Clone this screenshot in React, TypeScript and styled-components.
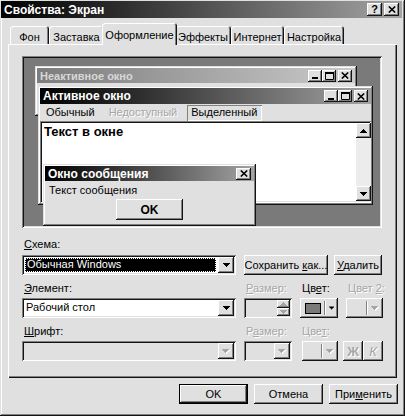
import React from "react";
import styled, { createGlobalStyle, css } from "styled-components";

const FACE = "#e0e0e0";
const LIGHT = "#ffffff";
const SHADOW = "#808080";
const DARK = "#141414";
const DISABLED = "#a6a6a6";

const GlobalStyle = createGlobalStyle`
  html, body { margin: 0; padding: 0; background: ${FACE}; }
  * { box-sizing: border-box; }
`;

const raisedBevel = css`
  box-shadow: inset -1px -1px ${DARK}, inset 1px 1px ${LIGHT}, inset -2px -2px ${SHADOW}, inset 2px 2px ${FACE};
`;
const windowBevel = css`
  box-shadow: inset -1px -1px ${DARK}, inset 1px 1px ${FACE}, inset -2px -2px ${SHADOW}, inset 2px 2px ${LIGHT};
`;
const sunkenBevel = css`
  box-shadow: inset 1px 1px ${SHADOW}, inset -1px -1px ${LIGHT}, inset 2px 2px ${DARK}, inset -2px -2px ${FACE};
`;
const disabledText = css`
  color: ${DISABLED};
  text-shadow: 1px 1px ${LIGHT};
`;

const Dialog = styled.div`
  width: 405px;
  height: 416px;
  padding: 1px 3px 3px 1px;
  background: ${FACE};
  ${windowBevel};
  display: flex;
  flex-direction: column;
  font-family: "Liberation Sans", Arial, sans-serif;
  font-size: 11px;
  color: #000;
`;

const Caption = styled.div<{ $variant: "active" | "inactive"; $height: number; $size: number }>`
  flex: none;
  height: ${(p) => p.$height}px;
  display: flex;
  align-items: center;
  justify-content: space-between;
  padding: 0 3px 0 3px;
  font-weight: bold;
  font-size: ${(p) => p.$size}px;
  white-space: nowrap;
  color: ${(p) => (p.$variant === "active" ? "#fff" : "#d8d8d8")};
  background: ${(p) =>
    p.$variant === "active"
      ? "linear-gradient(90deg, #000 0%, #202020 22%, #a4a4a4 100%)"
      : "linear-gradient(90deg, #7c7c7c 0%, #cacaca 100%)"};
`;

const CaptionButtons = styled.div<{ $gap: number }>`
  display: flex;
  gap: ${(p) => p.$gap}px;
`;

const CaptionButton = styled.div<{ $w: number; $h: number }>`
  width: ${(p) => p.$w}px;
  height: ${(p) => p.$h}px;
  background: ${FACE};
  ${raisedBevel};
  display: flex;
  align-items: center;
  justify-content: center;
  color: #000;
  font-size: 11px;
  font-weight: bold;
  line-height: 1;
`;

const Body = styled.div`
  flex: 1;
  display: flex;
  flex-direction: column;
  padding: 5px 5px 0 7px;
`;

const TabStrip = styled.div`
  display: flex;
  align-items: flex-end;
  height: 21px;
  padding-left: 2px;
  position: relative;
  z-index: 1;
`;

const Tab = styled.div<{ $width: number; $active?: boolean }>`
  width: ${(p) => p.$width}px;
  height: ${(p) => (p.$active ? 22 : 18)}px;
  margin: ${(p) => (p.$active ? "0 -2px -1px" : "0")};
  padding-top: ${(p) => (p.$active ? 6 : 5)}px;
  text-align: center;
  line-height: 13px;
  white-space: nowrap;
  background: ${FACE};
  border-radius: 3px 3px 0 0;
  box-shadow: inset 1px 1px ${LIGHT}, inset -1px 0 ${DARK}, inset -2px 0 ${SHADOW};
  position: relative;
  z-index: ${(p) => (p.$active ? 2 : 1)};
`;

const Panel = styled.div`
  height: 334px;
  flex: none;
  padding: 12px 14px 0;
  box-shadow: inset 1px 1px ${LIGHT}, inset -1px -1px ${DARK}, inset -2px -2px ${SHADOW};
  display: flex;
  flex-direction: column;
`;

/* preview desktop with overlapping sample windows */
const Desktop = styled.div`
  position: relative;
  flex: none;
  width: 360px;
  height: 172px;
  background: #7a7a7a;
  ${sunkenBevel};
  overflow: hidden;
`;

const SampleWindow = styled.div<{ $x: number; $y: number; $w: number; $h: number }>`
  position: absolute;
  left: ${(p) => p.$x}px;
  top: ${(p) => p.$y}px;
  width: ${(p) => p.$w}px;
  height: ${(p) => p.$h}px;
  padding: 2px;
  background: ${FACE};
  ${windowBevel};
  display: flex;
  flex-direction: column;
`;

const MenuBar = styled.div`
  height: 17px;
  display: flex;
  align-items: center;
  padding-left: 2px;
`;

const MenuItem = styled.div<{ $state?: "disabled" | "selected" }>`
  height: 16px;
  line-height: 15px;
  padding: 0 5px 0 4px;
  margin-right: 5px;
  ${(p) => p.$state === "disabled" && disabledText};
  ${(p) =>
    p.$state === "selected" &&
    css`
      box-shadow: inset 1px 1px ${SHADOW}, inset -1px -1px ${LIGHT};
    `};
`;

const TextArea = styled.div`
  flex: 1;
  display: flex;
  background: #fff;
  padding: 2px 0 2px 2px;
  ${sunkenBevel};
`;

const TextContent = styled.div`
  flex: 1;
  padding: 1px 2px;
  font-size: 13px;
  font-weight: bold;
  line-height: 15px;
`;

const ScrollBar = styled.div`
  width: 15px;
  display: flex;
  flex-direction: column;
  justify-content: space-between;
  background: #ececec;
`;

const ScrollButton = styled.div`
  width: 15px;
  height: 15px;
  background: ${FACE};
  ${raisedBevel};
  display: flex;
  align-items: center;
  justify-content: center;
`;

const MessageBody = styled.div`
  flex: 1;
  display: flex;
  flex-direction: column;
  padding: 3px 2px 0;
`;

const MessageText = styled.div`
  line-height: 13px;
  height: 14px;
  padding-left: 2px;
`;

const PushButton = styled.div<{ $w: number; $h: number; $default?: boolean; $bold?: boolean }>`
  width: ${(p) => p.$w}px;
  height: ${(p) => p.$h}px;
  background: ${FACE};
  ${raisedBevel};
  display: flex;
  align-items: center;
  justify-content: center;
  white-space: pre;
  font-weight: ${(p) => (p.$bold ? "bold" : "normal")};
  font-size: ${(p) => (p.$bold ? 12 : 11)}px;
  ${(p) =>
    p.$default &&
    css`
      box-shadow: inset 0 0 0 1px #000, inset -2px -2px ${DARK}, inset 2px 2px ${LIGHT}, inset -3px -3px ${SHADOW};
    `};
`;

const CenteredButton = styled(PushButton)`
  align-self: center;
  margin-top: 1px;
`;

/* form below the preview */
const Form = styled.div`
  margin-top: 10px;
  display: grid;
  grid-template-columns: 214px 48px 38px 37px;
  grid-template-rows: 17px 27px 16px 27px 16px 20px;
  column-gap: 8px;
  align-items: start;
`;

const Label = styled.div<{ $disabled?: boolean }>`
  height: 13px;
  line-height: 13px;
  padding-left: 2px;
  white-space: nowrap;
  ${(p) => p.$disabled && disabledText};
`;

const Key = styled.span`
  text-decoration: underline;
  text-underline-offset: 1px;
`;

const Field = styled.div<{ $disabled?: boolean }>`
  height: 20px;
  padding: 2px;
  display: flex;
  align-items: stretch;
  background: ${(p) => (p.$disabled ? FACE : "#fff")};
  ${sunkenBevel};
`;

const FieldText = styled.div<{ $selected?: boolean }>`
  flex: 1;
  line-height: 14px;
  padding-left: 2px;
  white-space: nowrap;
  overflow: hidden;
  ${(p) =>
    p.$selected &&
    css`
      margin: 1px 2px 1px 1px;
      line-height: 13px;
      background: #000;
      color: #fff;
      outline: 1px dotted #fff;
      outline-offset: -1px;
    `};
`;

const DropButton = styled.div`
  width: 16px;
  background: ${FACE};
  ${raisedBevel};
  display: flex;
  align-items: center;
  justify-content: center;
`;

const SpinColumn = styled.div`
  width: 13px;
  display: flex;
  flex-direction: column;
`;

const SpinButton = styled.div`
  flex: 1;
  background: ${FACE};
  ${raisedBevel};
  display: flex;
  align-items: center;
  justify-content: center;
`;

const ColorButton = styled.div<{ $ml?: number }>`
  height: 20px;
  margin-left: ${(p) => p.$ml || 0}px;
  padding: 0 4px 0 5px;
  background: ${FACE};
  ${raisedBevel};
  display: flex;
  align-items: center;
  justify-content: flex-end;
  gap: 3px;
`;

const Swatch = styled.div<{ $color: string }>`
  width: 20px;
  height: 11px;
  margin-right: auto;
  background: ${(p) => p.$color};
  border: 1px solid #000;
`;

const Divider = styled.div`
  width: 2px;
  height: 14px;
  border-left: 1px solid ${SHADOW};
  border-right: 1px solid ${LIGHT};
`;

const SchemeButtons = styled.div`
  grid-column: 2 / span 3;
  display: flex;
  gap: 6px;
`;

const StyleButtons = styled.div`
  display: flex;
  margin-left: -3px;
  width: 40px;
`;

const StyleButton = styled.div<{ $italic?: boolean }>`
  width: 20px;
  height: 20px;
  background: ${FACE};
  ${raisedBevel};
  display: flex;
  align-items: center;
  justify-content: center;
  font-size: 13px;
  font-weight: ${(p) => (p.$italic ? "normal" : "bold")};
  font-style: ${(p) => (p.$italic ? "italic" : "normal")};
  ${disabledText};
`;

const ButtonRow = styled.div`
  display: flex;
  justify-content: flex-end;
  gap: 6px;
  margin-top: 6px;
  margin-right: -1px;
`;

const ArrowDown = ({ color = "#000" }: { color?: string }) => (
  <svg width="7" height="4" viewBox="0 0 7 4" style={{ display: "block" }}>
    <path d="M0 0h7v1h-1v1h-1v1h-1v1h-1v-1h-1v-1h-1v-1h-1z" fill={color} />
  </svg>
);

const DisabledArrow = () => (
  <svg width="8" height="5" viewBox="0 0 8 5" style={{ display: "block" }}>
    <path d="M1 1h7v1h-1v1h-1v1h-1v1h-1v-1h-1v-1h-1v-1h-1z" fill="#fff" />
    <path d="M0 0h7v1h-1v1h-1v1h-1v1h-1v-1h-1v-1h-1v-1h-1z" fill={DISABLED} />
  </svg>
);

const ArrowUp = ({ color = "#000" }: { color?: string }) => (
  <svg width="7" height="4" viewBox="0 0 7 4" style={{ display: "block" }}>
    <path d="M3 0h1v1h1v1h1v1h1v1h-7v-1h1v-1h1v-1h1z" fill={color} />
  </svg>
);

const CloseGlyph = () => (
  <svg width="8" height="7" viewBox="0 0 8 7" style={{ display: "block" }}>
    <path d="M0.8 0.5L7.2 6.5M7.2 0.5L0.8 6.5" stroke="#000" strokeWidth="1.6" />
  </svg>
);

const MinGlyph = () => (
  <svg width="8" height="7" viewBox="0 0 8 7" style={{ display: "block" }}>
    <rect x="1" y="5" width="6" height="2" fill="#000" />
  </svg>
);

const MaxGlyph = () => (
  <svg width="9" height="8" viewBox="0 0 9 8" style={{ display: "block" }}>
    <path d="M0.5 0.5h8v7h-8z" fill="none" stroke="#000" />
    <rect x="0" y="0" width="9" height="2" fill="#000" />
  </svg>
);

const TABS = [
  { label: "Фон", width: 39 },
  { label: "Заставка", width: 55 },
  { label: "Оформление", width: 75, active: true },
  { label: "Эффекты", width: 56 },
  { label: "Интернет", width: 53 },
  { label: "Настройка", width: 60 },
];

const WindowControls = () => (
  <CaptionButtons $gap={0}>
    <CaptionButton $w={14} $h={12}>
      <MinGlyph />
    </CaptionButton>
    <CaptionButton $w={14} $h={12} style={{ marginRight: 2 }}>
      <MaxGlyph />
    </CaptionButton>
    <CaptionButton $w={14} $h={12}>
      <CloseGlyph />
    </CaptionButton>
  </CaptionButtons>
);

const App: React.FC = () => {
  return (
    <>
      <GlobalStyle />
      <Dialog>
        <Caption $variant="active" $height={17} $size={12}>
          <span>Свойства: Экран</span>
          <CaptionButtons $gap={2}>
            <CaptionButton $w={15} $h={13}>?</CaptionButton>
            <CaptionButton $w={15} $h={13}>
              <CloseGlyph />
            </CaptionButton>
          </CaptionButtons>
        </Caption>
        <Body>
          <TabStrip>
            {TABS.map((tab) => (
              <Tab key={tab.label} $width={tab.width} $active={tab.active}>
                {tab.label}
              </Tab>
            ))}
          </TabStrip>
          <Panel>
            <Desktop>
              <SampleWindow $x={13} $y={10} $w={322} $h={50}>
                <Caption $variant="inactive" $height={15} $size={11}>
                  <span>Неактивное окно</span>
                  <WindowControls />
                </Caption>
              </SampleWindow>
              <SampleWindow $x={16} $y={30} $w={335} $h={119}>
                <Caption $variant="active" $height={16} $size={12}>
                  <span>Активное окно</span>
                  <WindowControls />
                </Caption>
                <MenuBar>
                  <MenuItem>Обычный</MenuItem>
                  <MenuItem $state="disabled">Недоступный</MenuItem>
                  <MenuItem $state="selected">Выделенный</MenuItem>
                </MenuBar>
                <TextArea>
                  <TextContent>Текст в окне</TextContent>
                  <ScrollBar>
                    <ScrollButton>
                      <ArrowUp />
                    </ScrollButton>
                    <ScrollButton>
                      <ArrowDown />
                    </ScrollButton>
                  </ScrollBar>
                </TextArea>
              </SampleWindow>
              <SampleWindow $x={21} $y={108} $w={213} $h={62}>
                <Caption $variant="active" $height={15} $size={12}>
                  <span>Окно сообщения</span>
                  <CaptionButton $w={15} $h={12}>
                    <CloseGlyph />
                  </CaptionButton>
                </Caption>
                <MessageBody>
                  <MessageText>Текст сообщения</MessageText>
                  <CenteredButton $w={67} $h={21} $bold>
                    OK
                  </CenteredButton>
                </MessageBody>
              </SampleWindow>
            </Desktop>

            <Form>
              <Label style={{ gridColumn: "1 / span 4" }}>
                <Key>С</Key>хема:
              </Label>
              <Field>
                <FieldText $selected>Обычная Windows</FieldText>
                <DropButton>
                  <ArrowDown />
                </DropButton>
              </Field>
              <SchemeButtons>
                <PushButton $w={84} $h={20}>
                  <span>
                    Сохранить <Key>к</Key>ак...
                  </span>
                </PushButton>
                <PushButton $w={48} $h={20}>
                  <span>
                    <Key>У</Key>далить
                  </span>
                </PushButton>
              </SchemeButtons>

              <Label>
                <Key>Э</Key>лемент:
              </Label>
              <Label $disabled>
                <Key>Р</Key>азмер:
              </Label>
              <Label>
                Цв<Key>е</Key>т:
              </Label>
              <Label $disabled>
                Цвет <Key>2</Key>:
              </Label>
              <Field>
                <FieldText>Рабочий стол</FieldText>
                <DropButton>
                  <ArrowDown />
                </DropButton>
              </Field>
              <Field $disabled>
                <FieldText />
                <SpinColumn>
                  <SpinButton>
                    <ArrowUp color={DISABLED} />
                  </SpinButton>
                  <SpinButton>
                    <ArrowDown color={DISABLED} />
                  </SpinButton>
                </SpinColumn>
              </Field>
              <ColorButton>
                <Swatch $color="#7a7a7a" />
                <Divider />
                <ArrowDown />
              </ColorButton>
              <ColorButton>
                <Divider />
                <DisabledArrow />
              </ColorButton>

              <Label>
                <Key>Ш</Key>рифт:
              </Label>
              <Label $disabled>
                Р<Key>а</Key>змер:
              </Label>
              <Label $disabled>
                Цве<Key>т</Key>:
              </Label>
              <span />
              <Field $disabled>
                <FieldText />
                <DropButton>
                  <DisabledArrow />
                </DropButton>
              </Field>
              <Field $disabled>
                <FieldText />
                <DropButton>
                  <DisabledArrow />
                </DropButton>
              </Field>
              <ColorButton $ml={2}>
                <Divider />
                <DisabledArrow />
              </ColorButton>
              <StyleButtons>
                <StyleButton>Ж</StyleButton>
                <StyleButton $italic>К</StyleButton>
              </StyleButtons>
            </Form>
          </Panel>
          <ButtonRow>
            <PushButton $w={69} $h={20} $default>
              OK
            </PushButton>
            <PushButton $w={69} $h={20}>
              Отмена
            </PushButton>
            <PushButton $w={69} $h={20}>
              <span>
                При<Key>м</Key>енить
              </span>
            </PushButton>
          </ButtonRow>
        </Body>
      </Dialog>
    </>
  );
};

export default App;
